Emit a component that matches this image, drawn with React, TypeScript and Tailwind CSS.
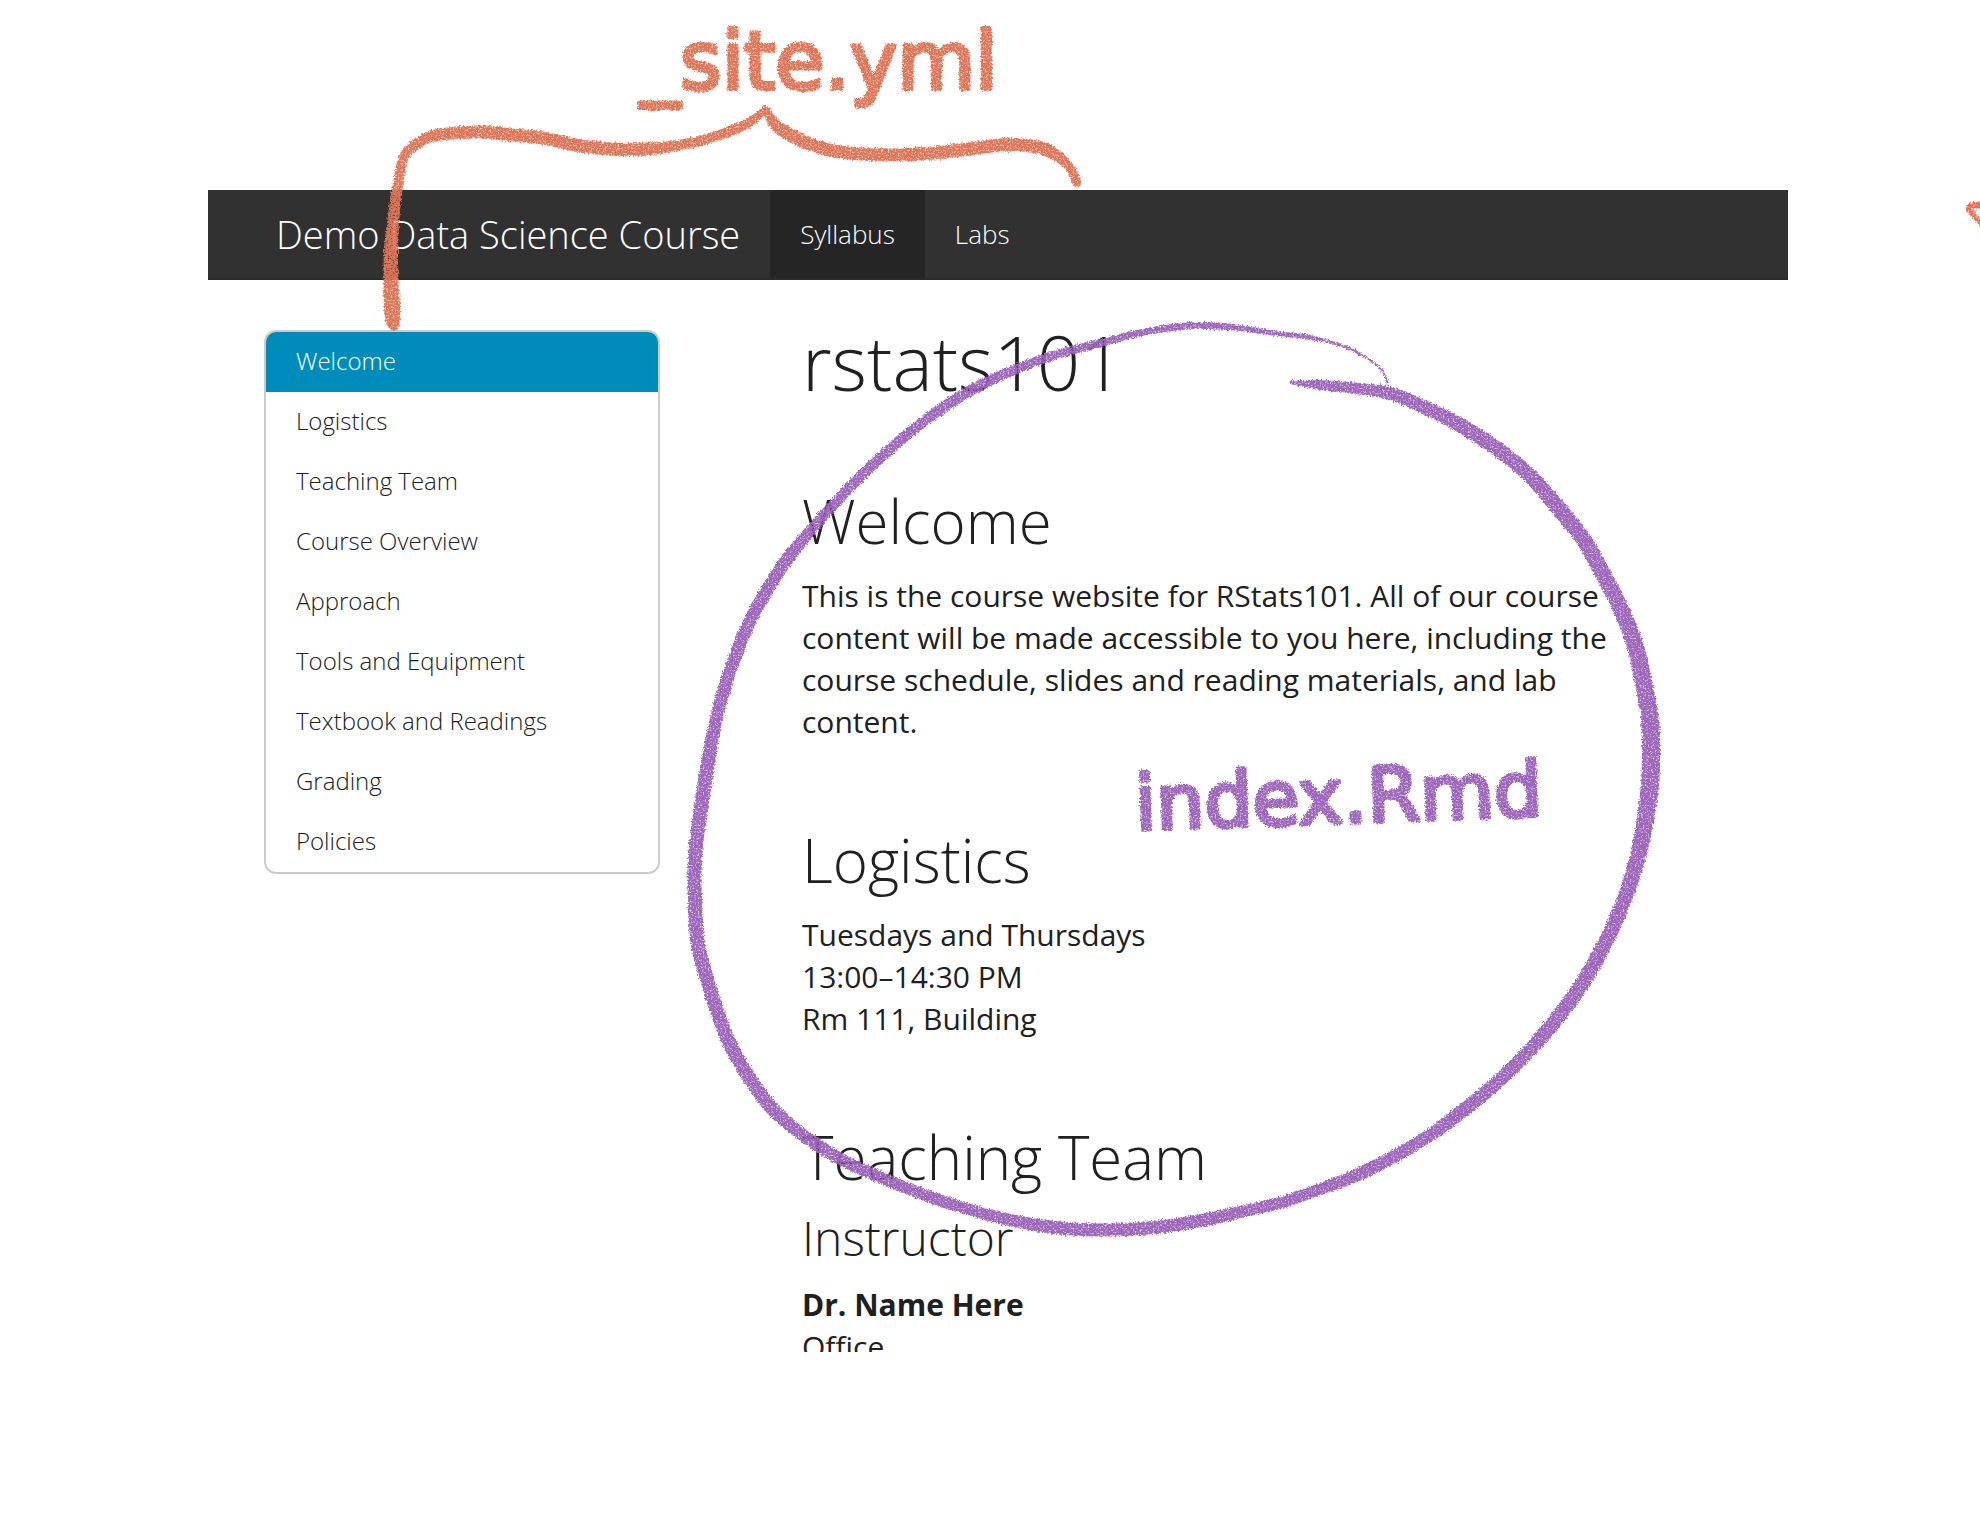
type BrushPoint = [x: number, y: number, width: number];

const sections = [
  'Welcome',
  'Logistics',
  'Teaching Team',
  'Course Overview',
  'Approach',
  'Tools and Equipment',
  'Textbook and Readings',
  'Grading',
  'Policies',
];

const slug = (name: string) => '#' + name.toLowerCase().replace(/ /g, '-');

const circle: BrushPoint[] = [
  [1290, 382, 3], [1320, 385, 9], [1342, 387, 10], [1370, 390, 11], [1395, 395, 12], [1435, 412, 13],
  [1470, 431, 14], [1500, 451, 14], [1530, 476, 14], [1555, 504, 15], [1584, 540, 15], [1603, 574, 15],
  [1620, 607, 15], [1635, 645, 16], [1644, 685, 16], [1650, 720, 17], [1651, 752, 17], [1650, 785, 17],
  [1645, 822, 16], [1637, 860, 15], [1623, 903, 14], [1604, 945, 14], [1580, 987, 14], [1554, 1022, 14],
  [1526, 1054, 13], [1494, 1085, 13], [1460, 1113, 13], [1427, 1137, 12], [1393, 1157, 12],
  [1357, 1175, 12], [1323, 1188, 11], [1283, 1202, 11], [1240, 1212, 11], [1209, 1219, 12],
  [1159, 1227, 12], [1101, 1230, 12], [1051, 1227, 12], [1001, 1218, 11], [951, 1204, 11],
  [909, 1189, 11], [873, 1174, 11], [844, 1161, 11], [816, 1144, 12], [791, 1126, 12], [769, 1105, 13],
  [751, 1080, 13], [734, 1052, 13], [719, 1017, 13], [707, 979, 13], [698, 945, 13], [695, 902, 13],
  [695, 857, 13], [700, 814, 13], [706, 775, 13], [714, 730, 12], [723, 693, 12], [735, 657, 12],
  [750, 621, 12], [767, 590, 12], [786, 561, 12], [805, 537, 11], [826, 513, 10], [851, 486, 10],
  [880, 458, 10], [909, 433, 10], [941, 409, 10], [973, 389, 10], [1009, 372, 9], [1055, 355, 8],
  [1101, 343, 7], [1144, 332, 6], [1187, 326, 6], [1216, 326, 6], [1240, 328, 5], [1273, 333, 4],
  [1307, 337, 4], [1330, 342, 2], [1350, 349, 2], [1370, 360, 1], [1383, 372, 1], [1388, 384, 1],
];

const braceStem: BrushPoint[] = [
  [402, 162, 9], [399, 178, 9], [396, 197, 10], [393, 223, 11], [391, 250, 13], [391, 280, 14],
  [392, 307, 15], [393, 322, 13], [394, 330, 6],
];

const braceLeft: BrushPoint[] = [
  [401, 168, 6], [405, 155, 9], [418, 143, 10], [437, 135, 11], [479, 132, 12], [511, 135, 12],
  [543, 138, 12], [575, 145, 12], [611, 149, 12], [646, 149, 12], [667, 147, 10], [700, 141, 9],
  [733, 130, 9], [753, 120, 8], [767, 107, 5],
];

const braceRight: BrushPoint[] = [
  [766, 107, 5], [773, 122, 10], [787, 133, 12], [813, 145, 12], [840, 152, 12], [887, 155, 12],
  [933, 153, 12], [970, 149, 12], [1000, 145, 12], [1023, 145, 12], [1044, 149, 12], [1060, 158, 10],
  [1070, 168, 8], [1076, 180, 9], [1076, 186, 5],
];

const edgeMark: BrushPoint[] = [
  [1990, 205, 6], [1978, 205, 6], [1969, 208, 6], [1974, 215, 5], [1986, 228, 6],
];

/* Outline of a brush stroke whose width changes along its centre line. */
function brush(points: BrushPoint[]): string {
  const dense: BrushPoint[] = [];
  for (let i = 0; i < points.length - 1; i++) {
    const p0 = points[Math.max(i - 1, 0)];
    const p1 = points[i];
    const p2 = points[i + 1];
    const p3 = points[Math.min(i + 2, points.length - 1)];
    for (let s = 0; s < 6; s++) {
      const t = s / 6;
      const at = (k: 0 | 1 | 2) =>
        0.5 *
        (2 * p1[k] +
          (p2[k] - p0[k]) * t +
          (2 * p0[k] - 5 * p1[k] + 4 * p2[k] - p3[k]) * t * t +
          (3 * p1[k] - p0[k] - 3 * p2[k] + p3[k]) * t * t * t);
      dense.push([at(0), at(1), at(2)]);
    }
  }
  dense.push(points[points.length - 1]);
  const left: string[] = [];
  const right: string[] = [];
  dense.forEach((p, i) => {
    const a = dense[Math.max(i - 1, 0)];
    const b = dense[Math.min(i + 1, dense.length - 1)];
    const len = Math.hypot(b[0] - a[0], b[1] - a[1]) || 1;
    const nx = ((a[1] - b[1]) / len) * (p[2] / 2);
    const ny = ((b[0] - a[0]) / len) * (p[2] / 2);
    left.push(`${(p[0] + nx).toFixed(1)} ${(p[1] + ny).toFixed(1)}`);
    right.unshift(`${(p[0] - nx).toFixed(1)} ${(p[1] - ny).toFixed(1)}`);
  });
  return `M${left.concat(right).join('L')}Z`;
}

function Annotations() {
  return (
    <svg
      className="pointer-events-none absolute left-0 top-0 h-auto w-full"
      viewBox="0 0 1980 1534"
      aria-label="Annotations"
    >
      <defs>
        <filter
          id="crayon"
          filterUnits="userSpaceOnUse"
          x="0"
          y="0"
          width="1980"
          height="1534"
          colorInterpolationFilters="sRGB"
        >
          <feTurbulence type="fractalNoise" baseFrequency="0.6" numOctaves="3" seed="4" result="noise" />
          <feDisplacementMap in="SourceGraphic" in2="noise" scale="5" xChannelSelector="R" yChannelSelector="G" result="rough" />
          <feColorMatrix in="noise" type="matrix" values="0 0 0 0 0  0 0 0 0 0  0 0 0 0 0  0 0 2.2 0 -0.1" result="grain" />
          <feComposite in="rough" in2="grain" operator="in" />
        </filter>
      </defs>
      <g filter="url(#crayon)" strokeLinejoin="round">
        <g className="fill-[#dd7658] stroke-[#dd7658]">
          <path d={brush(braceStem)} />
          <path d={brush(braceLeft)} />
          <path d={brush(braceRight)} />
          <path d={brush(edgeMark)} />
          <text x="640" y="89" strokeWidth="4" className="font-['DejaVu_Sans',sans-serif] text-[80px]">
            _site.yml
          </text>
        </g>
        <g className="fill-[#9c64ba] stroke-[#9c64ba]">
          <path d={brush(circle)} />
          <text
            x="1136"
            y="830"
            strokeWidth="4"
            transform="rotate(-2 1136 830)"
            className="font-['DejaVu_Sans',sans-serif] text-[76px]"
          >
            index.Rmd
          </text>
        </g>
      </g>
    </svg>
  );
}

export default function App() {
  return (
    <div className="relative min-h-screen overflow-hidden bg-white pt-[190px] pr-48 pb-[182px] pl-52 font-['Open_Sans',sans-serif] text-[#202020]">
      <div className="h-[1162px] overflow-hidden">
        <nav className="flex h-[90px] items-stretch border-b-2 border-[#2b2b2b] bg-[#313131] pl-[38px] text-white">
          <a href="#top" className="flex items-center px-[30px] text-[38px] font-light">
            Demo Data Science Course
          </a>
          <a href="#syllabus" aria-current="page" className="flex items-center bg-[#252525] px-[30px] text-[26px] font-light">
            Syllabus
          </a>
          <a href="#labs" className="flex items-center px-[30px] text-[26px] font-light">
            Labs
          </a>
        </nav>

        <div className="flex items-start gap-[142px] pt-10 pr-[134px] pl-14">
          <aside className="mt-[10px] w-[396px] shrink-0 overflow-hidden rounded-[12px] border-2 border-[#cccccc]">
            <ul>
              {sections.map((name, i) => (
                <li key={name}>
                  <a
                    href={slug(name)}
                    className={
                      i === 0
                        ? 'flex h-[60px] items-center bg-[#008cba] px-[30px] pb-0.5 text-[24px] font-light text-white'
                        : 'flex h-[60px] items-center px-[30px] pb-0.5 text-[24px] font-light'
                    }
                  >
                    {name}
                  </a>
                </li>
              ))}
            </ul>
          </aside>

          <main className="min-w-0 flex-1 text-[30px] leading-[42px]">
            <h1 className="text-[76px] leading-[84px] font-light">rstats101</h1>

            <section id="welcome" className="mt-[84px]">
              <h2 className="text-[60px] leading-[66px] font-light">Welcome</h2>
              <p className="mt-[21px]">
                This is the course website for RStats101. All of our course content will be made accessible to you here,
                including the course schedule, slides and reading materials, and lab content.
              </p>
            </section>

            <section id="logistics" className="mt-[84px]">
              <h2 className="text-[60px] leading-[66px] font-light">Logistics</h2>
              <p className="mt-[21px]">
                Tuesdays and Thursdays
                <br />
                13:00–14:30 PM
                <br />
                Rm 111, Building
              </p>
            </section>

            <section id="teaching-team" className="mt-[84px]">
              <h2 className="text-[60px] leading-[66px] font-light">Teaching Team</h2>
              <h3 className="mt-[21px] text-[48px] leading-[53px] font-light">Instructor</h3>
              <p className="mt-5">
                <strong className="font-bold">Dr. Name Here</strong>
                <br />
                Office
              </p>
            </section>
          </main>
        </div>
      </div>
      <Annotations />
    </div>
  );
}
